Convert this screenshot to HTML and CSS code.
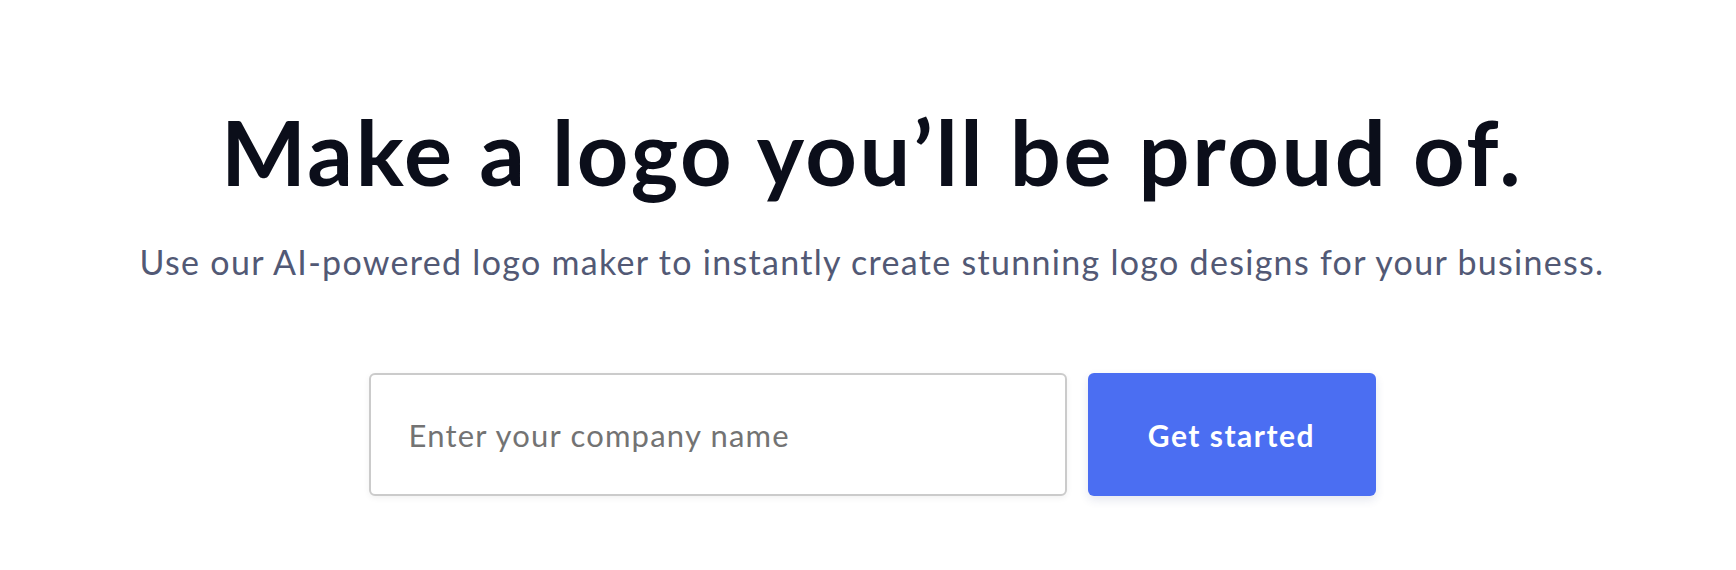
FILE: index.html
```html
<!DOCTYPE html>
<html lang="en">
<head>
<meta charset="utf-8">
<title>Logo maker</title>
<link rel="stylesheet" href="styles.css">
</head>
<body>
<main class="hero">
  <h1 class="hero-title">Make a logo you’ll be proud of.</h1>
  <p class="hero-subtitle">Use our AI-powered logo maker to instantly create stunning logo designs for your business.</p>
  <form class="hero-form">
    <input class="hero-input" type="text" placeholder="Enter your company name">
    <button class="hero-button" type="button">Get started</button>
  </form>
</main>
</body>
</html>
```

FILE: styles.css
```css
html, body {
  margin: 0;
  padding: 0;
  background: #ffffff;
}

body {
  font-family: "Lato", "Open Sans", sans-serif;
  width: 1736px;
  height: 570px;
  overflow: hidden;
}

.hero {
  display: flex;
  flex-direction: column;
  align-items: center;
  padding-top: 101px;
  padding-left: 8px;
}

.hero-title {
  margin: 0;
  font-size: 90px;
  line-height: 100px;
  font-weight: 700;
  color: #0b0e1a;
  letter-spacing: 2.6px;
}

.hero-subtitle {
  margin: 41px 0 0;
  font-size: 34px;
  line-height: 40px;
  font-weight: 400;
  color: #525975;
  letter-spacing: 1.3px;
}

.hero-form {
  display: flex;
  gap: 21px;
  margin-top: 91px;
}

.hero-input {
  box-sizing: border-box;
  width: 698px;
  height: 123px;
  padding: 0 38px;
  border: 2px solid #cbcbcb;
  border-radius: 6px;
  box-shadow: 0 2px 6px rgba(0, 0, 0, 0.06);
  font-family: inherit;
  font-size: 31px;
  letter-spacing: 1.2px;
  color: #333;
  outline: none;
}

.hero-input::placeholder {
  color: #737373;
}

.hero-button {
  box-sizing: border-box;
  width: 288px;
  height: 123px;
  border: none;
  border-radius: 6px;
  background: #4b6ef2;
  box-shadow: 0 4px 10px rgba(40, 60, 120, 0.12);
  color: #ffffff;
  font-family: inherit;
  font-size: 30px;
  font-weight: 700;
  letter-spacing: 1.5px;
  cursor: pointer;
}
```
